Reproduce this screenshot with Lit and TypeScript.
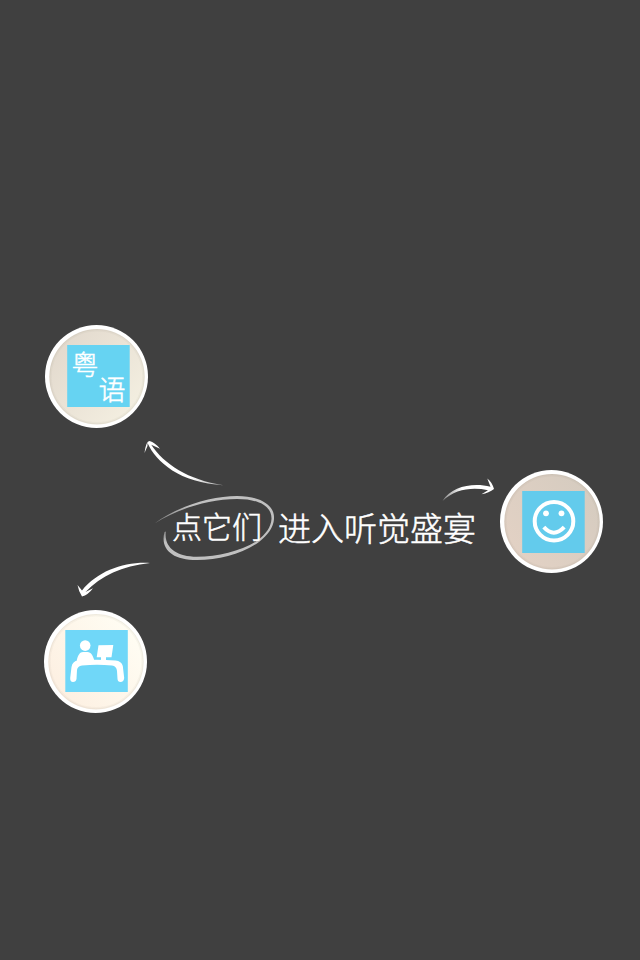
import { LitElement, html, svg, css } from "lit";
import { customElement, property } from "lit/decorators.js";

@customElement("channel-badge")
class ChannelBadge extends LitElement {
  @property() kind = "smile";

  static styles = css`
    :host { display: block; width: 103px; height: 103px; }
    svg { display: block; width: 103px; height: 103px; }
    text {
      font-family: "Noto Sans CJK SC", sans-serif; font-size: 27px; font-weight: 300;
      fill: #fff; stroke: #fff; stroke-width: 0.5px;
    }
  `;

  render() {
    const looks: Record<string, any> = {
      cantonese: { from: "#e2d9cd", to: "#f3eee0", tile: "#66d3f2", x: 22.2, y: 20 },
      desk: { from: "#fdf0e2", to: "#fffdf3", tile: "#70d7f8", x: 21.3, y: 20 },
      smile: { from: "#e2d1c4", to: "#d6ccc0", tile: "#63cbec", x: 22.2, y: 21 },
    };
    const k = looks[this.kind];
    const rising = this.kind !== "cantonese";
    return html`<svg viewBox="0 0 103 103">
      <defs>
        <linearGradient id="g" x1="0.1" y1=${rising ? ".8" : ".1"} x2=".9" y2=${rising ? ".2" : ".8"}>
          <stop offset="0" stop-color=${k.from} /><stop offset="1" stop-color=${k.to} />
        </linearGradient>
      </defs>
      <circle cx="51.5" cy="51.5" r="51.5" fill="#fff" />
      <circle cx="52" cy="51.7" r="47.7" fill="url(#g)" />
      <circle cx="52" cy="51.7" r="46.5" fill="none" stroke="#8a8078" stroke-opacity=".06" stroke-width="2.4" />
      <circle cx="52" cy="51.7" r="47.2" fill="none" stroke="#8a8078" stroke-opacity=".08" stroke-width="1" />
      <rect x=${k.x} y=${k.y} width="62.5" height="62" fill=${k.tile} />
      ${this.glyph()}
    </svg>`;
  }

  glyph() {
    if (this.kind === "cantonese")
      return svg`<text x="26.5" y="50">粤</text><text x="53.5" y="75">语</text>`;
    if (this.kind === "desk")
      return svg`<g fill="#fff">
        <circle cx="41.2" cy="35.6" r="5.3" />
        <path d="M32.5 52C33.5 45 36 42 39 42H43.5C47 42 49.5 46 50.5 52Z" />
        <path d="M54.5 35.3L69.3 35 67.5 47.3H62V52H57V47.3H52.7Z" />
        <path d="M27.5 57Q28.5 51 34 50.5Q52 49 71.5 50.5Q77.5 51 78.8 56L80.2 68Q79.8 72 76.5 72Q73.7 72 73.5 69L73 61Q72.5 56.2 68 55.5Q53 54 38 55.5Q33.5 56 33 60L32.5 69Q32 72 29 72Q26 72 26.2 68Z" />
      </g>`;
    return svg`<g fill="none" stroke="#fff" stroke-width="4">
      <circle cx="54" cy="51.3" r="19.3" />
      <path d="M43.8 57.2Q53.8 68.2 64.2 57.2" />
      <circle cx="46" cy="43.3" r="2.9" fill="#fff" stroke="none" />
      <circle cx="61.5" cy="43.3" r="2.9" fill="#fff" stroke="none" />
    </g>`;
  }
}

@customElement("app-root")
class AppRoot extends LitElement {
  static styles = css`
    :host {
      display: block; position: relative; width: 640px; height: 960px;
      overflow: hidden; background: #404040;
    }
    .strokes { position: absolute; inset: 0; width: 640px; height: 960px; }
    .pin { position: absolute; }
    .cantonese { left: 45px; top: 325px; }
    .desk { left: 44px; top: 610px; }
    .smile { left: 500px; top: 470px; }
    .hint {
      position: absolute; left: 172px; top: 501px; display: flex; align-items: center;
      gap: 16px; color: #fff; white-space: nowrap; line-height: 48px;
      font-family: "Noto Sans CJK SC", sans-serif; font-weight: 300;
      -webkit-text-stroke: 0.5px #fff;
    }
    .target { font-size: 30px; padding-bottom: 3px; }
    .promise { font-size: 33px; }
  `;

  render() {
    return html`
      <svg class="strokes" viewBox="0 0 640 960">
        <defs>
          <linearGradient id="a" gradientUnits="userSpaceOnUse" x1="190" y1="0" x2="225" y2="0">
            <stop stop-color="#fff" /><stop offset="1" stop-color="#fff" stop-opacity=".5" />
          </linearGradient>
          <linearGradient id="c" gradientUnits="userSpaceOnUse" x1="440" y1="0" x2="462" y2="0">
            <stop stop-color="#fff" stop-opacity=".3" /><stop offset="1" stop-color="#fff" />
          </linearGradient>
          <linearGradient id="o" gradientUnits="userSpaceOnUse" x1="154" y1="0" x2="190" y2="0">
            <stop stop-color="#bbb" stop-opacity=".5" /><stop offset="1" stop-color="#c0c0c0" />
          </linearGradient>
          <linearGradient id="p" gradientUnits="userSpaceOnUse" x1="0" y1="530" x2="0" y2="542">
            <stop stop-color="#bbb" stop-opacity=".5" /><stop offset="1" stop-color="#c0c0c0" />
          </linearGradient>
        </defs>
        <path fill="url(#a)" d="M147.5 443C156 462 180 483 223.5 485.2C188 480 164 464 151.2 444.8L160 448.7Q155 442.5 149.5 441Q146 441 144.5 453L147.5 446Z" />
        <path fill="#fff" d="M150 563C124 561.5 98 571 82 590.5L77.5 585Q78.5 591 82 596.4Q88 595 93 588.2L85.5 592C101 575.5 122 566.2 150 563Z" />
        <path fill="url(#c)" d="M442.5 501C452 486 473 482.5 490.5 486.7L487.3 478.5Q492 482 494 489Q489 493 481.5 494.2L488 490.2C472 486.8 455 489 442.5 501Z" />
        <path fill="url(#o)" d="M154.5 523.5C178 506 212 496 237 496C262 496 275 506 274 519C273.5 527 268 535 259 542L257 541C266 534 271 527 271.5 519C272 507 260 499 237 499C208 499 178 509 154.500 523.5Z" />
        <path fill="url(#p)" d="M259 542C242 554 219 560 197 560C172 560 160 549 164.500 532L166 531.500C163.500 547 176 556.800 197 556.800C218 556.800 241 551 257 541Z" />
      </svg>
      <div class="hint"><span class="target">点它们</span><span class="promise">进入听觉盛宴</span></div>
      <channel-badge class="pin cantonese" kind="cantonese"></channel-badge>
      <channel-badge class="pin smile" kind="smile"></channel-badge>
      <channel-badge class="pin desk" kind="desk"></channel-badge>
    `;
  }
}
